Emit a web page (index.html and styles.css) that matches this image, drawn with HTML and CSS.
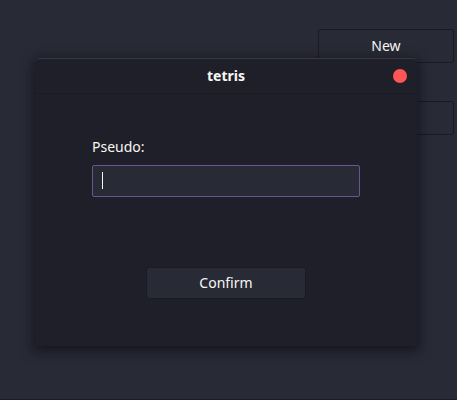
FILE: index.html
```html
<!DOCTYPE html>
<html lang="en">
<head>
  <meta charset="utf-8">
  <title>tetris</title>
  <link rel="stylesheet" href="styles.css">
</head>
<body>
  <main class="menu">
    <button class="menu-button" type="button">New</button>
    <button class="menu-button" type="button" aria-label="Quit"></button>
  </main>
  <section class="dialog" role="dialog" aria-labelledby="dialog-title">
    <header class="titlebar">
      <h1 class="title" id="dialog-title">tetris</h1>
      <button class="close" type="button" aria-label="Close"></button>
    </header>
    <form class="form">
      <label class="label" for="pseudo">Pseudo:</label>
      <div class="field">
        <input class="input" id="pseudo" type="text">
        <span class="caret"></span>
      </div>
      <button class="confirm" type="button">Confirm</button>
    </form>
  </section>
</body>
</html>
```
FILE: styles.css
```css
* {
  box-sizing: border-box;
}

body {
  margin: 0;
  min-height: 100vh;
  position: relative;
  background: #282a36;
  border-bottom: 1px solid #1f1a26;
  color: #f8f8f2;
  font: 14px/20px "Noto Sans", sans-serif;
}

button,
input {
  margin: 0;
  font: inherit;
  color: inherit;
}

.menu {
  display: flex;
  flex-direction: column;
  align-items: flex-end;
  gap: 38px;
  padding: 29px 3px 0;
}

.menu-button {
  width: 136px;
  height: 34px;
  padding: 0;
  background: #282a36;
  border: 1px solid #191a22;
  border-radius: 2px;
}

.dialog {
  position: absolute;
  top: 58px;
  left: 35px;
  right: 40px;
  background: #1f1f29;
  border-radius: 5px 5px 0 0;
  box-shadow: 0 3px 12px 2px rgba(10, 8, 16, 0.6);
}

.titlebar {
  display: grid;
  grid-template-columns: 1fr auto 1fr;
  align-items: center;
  height: 36px;
  padding: 0 10px;
  border-top: 1px solid #393842;
  border-bottom: 1px solid #1b1b24;
  border-radius: 5px 5px 0 0;
}

.title {
  grid-column: 2;
  margin: 0;
  font-size: 14px;
  font-weight: 700;
}

.close {
  justify-self: end;
  width: 14px;
  height: 14px;
  padding: 0;
  border: 0;
  border-radius: 50%;
  background: #ff5555;
}

.form {
  display: flex;
  flex-direction: column;
  padding: 43px 57px 47px;
}

.label {
  align-self: flex-start;
  margin-bottom: 8px;
}

.field {
  position: relative;
}

.input {
  display: block;
  width: 100%;
  height: 32px;
  padding: 0 9px;
  background: #282a36;
  border: 1px solid #6b5590;
  border-radius: 2px;
  outline: 0;
}

.caret {
  position: absolute;
  top: 7px;
  left: 10px;
  width: 1px;
  height: 17px;
  background: #f8f8f2;
}

.confirm {
  align-self: center;
  width: 160px;
  height: 32px;
  margin-top: 70px;
  padding: 0;
  background: #282a36;
  border: 1px solid #1b1b24;
  border-radius: 3px;
}
```
